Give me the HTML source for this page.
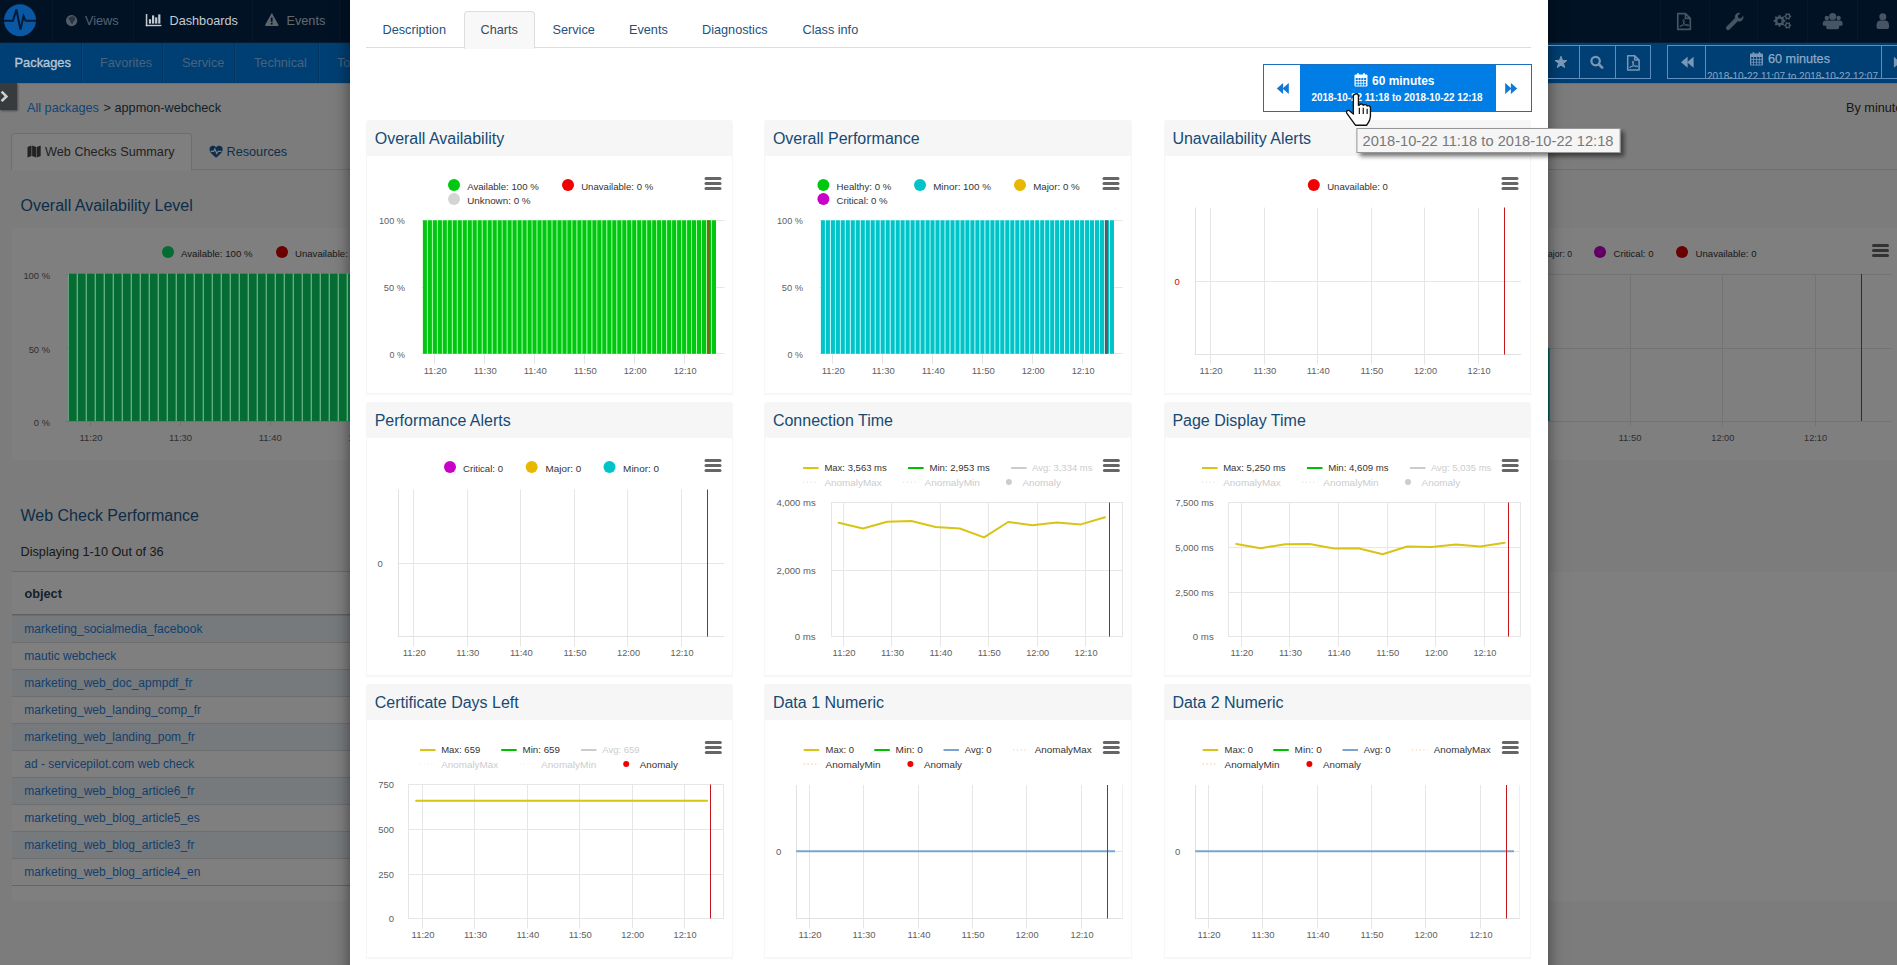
<!DOCTYPE html>
<html><head><meta charset="utf-8"><title>Charts</title>
<style>
html,body{margin:0;padding:0;}
body{width:1897px;height:965px;overflow:hidden;position:relative;background:#fff;font-family:"Liberation Sans", sans-serif;font-size:14px;color:#333;}
.abs{position:absolute;}
.t{position:absolute;white-space:nowrap;line-height:20px;height:20px;}
svg{position:absolute;left:0;top:0;overflow:visible;}
svg text{font-family:"Liberation Sans", sans-serif;}
#bg{position:absolute;left:0;top:0;width:1897px;height:965px;overflow:hidden;background:#fff;}
#ov{position:absolute;left:0;top:0;width:1897px;height:965px;background:rgba(0,0,0,.5);}
#modal{position:absolute;left:350px;top:-20px;width:1198px;height:1010px;background:#fff;box-shadow:0 5px 15px rgba(0,0,0,.5);}
#mc{position:absolute;left:0;top:0;width:1897px;height:965px;overflow:hidden;}
</style></head><body>
<div id="bg">
<div class="abs" style="left:0;top:83px;width:1897px;height:882px;background:#f8f8f8"></div>
<div class="abs" style="left:12px;top:228px;width:1885px;height:232px;background:#fff"></div>
<div class="abs" style="left:12px;top:572px;width:1885px;height:329px;background:#fff"></div>
<div class="abs" style="left:0;top:0;width:1897px;height:43px;background:#02254a"></div>
<div class="abs" style="left:0;top:43px;width:1897px;height:40px;background:#007ee6"></div>
<div class="abs" style="left:0;top:42px;width:1897px;height:1px;background:#0d3a66"></div>
<div class="abs" style="left:52px;top:0;width:1px;height:42px;background:#0e3156"></div>
<div class="abs" style="left:133px;top:0;width:1px;height:42px;background:#0e3156"></div>
<div class="abs" style="left:252px;top:0;width:1px;height:42px;background:#0e3156"></div>
<div class="abs" style="left:339px;top:0;width:1px;height:42px;background:#0e3156"></div>
<div class="abs" style="left:1660px;top:0;width:1px;height:42px;background:#0e3156"></div>
<div class="abs" style="left:1709px;top:0;width:1px;height:42px;background:#0e3156"></div>
<div class="abs" style="left:1757px;top:0;width:1px;height:42px;background:#0e3156"></div>
<div class="abs" style="left:1807px;top:0;width:1px;height:42px;background:#0e3156"></div>
<div class="abs" style="left:1857px;top:0;width:1px;height:42px;background:#0e3156"></div>
<div class="abs" style="left:81px;top:43px;width:1px;height:40px;background:#0468c0"></div>
<div class="abs" style="left:82px;top:43px;width:1px;height:40px;background:#1489ee"></div>
<div class="abs" style="left:162px;top:43px;width:1px;height:40px;background:#0468c0"></div>
<div class="abs" style="left:163px;top:43px;width:1px;height:40px;background:#1489ee"></div>
<div class="abs" style="left:234px;top:43px;width:1px;height:40px;background:#0468c0"></div>
<div class="abs" style="left:235px;top:43px;width:1px;height:40px;background:#1489ee"></div>
<div class="abs" style="left:318px;top:43px;width:1px;height:40px;background:#0468c0"></div>
<div class="abs" style="left:319px;top:43px;width:1px;height:40px;background:#1489ee"></div>
<div class="abs" style="left:0;top:83px;width:1897px;height:1px;background:#cfe3f3"></div>
<div class="t" style="left:85.0px;top:10.5px;color:#a8c0e0;font-size:12.7px;font-weight:normal;">Views</div>
<div class="t" style="left:286.5px;top:10.5px;color:#c2cfdd;font-size:12.7px;font-weight:normal;">Events</div>
<div class="t" style="left:100.0px;top:52.5px;color:#8ec4fb;font-size:12.7px;font-weight:normal;">Favorites</div>
<div class="t" style="left:182.0px;top:52.5px;color:#8ec4fb;font-size:12.7px;font-weight:normal;">Service</div>
<div class="t" style="left:254.0px;top:52.5px;color:#8ec4fb;font-size:12.7px;font-weight:normal;">Technical</div>
<div class="t" style="left:337.0px;top:52.5px;color:#8ec4fb;font-size:12.7px;font-weight:normal;">Tools</div>
<div class="abs" style="left:0;top:83px;width:17px;height:27px;background:#70767c;box-shadow:1px 1px 2px rgba(0,0,0,.4)"></div>
<div class="t" style="left:27.0px;top:97.5px;color:#2a8ae8;font-size:12.7px;font-weight:normal;">All packages</div>
<div class="t" style="left:103.5px;top:97.5px;color:#444;font-size:12.7px;font-weight:normal;">&gt;</div>
<div class="t" style="left:114.5px;top:97.5px;color:#2a3e54;font-size:12.7px;font-weight:normal;">appmon-webcheck</div>
<div class="t" style="left:1846.0px;top:97.5px;color:#333;font-size:12.7px;font-weight:normal;">By minute</div>
<div class="abs" style="left:12px;top:169px;width:1885px;height:1px;background:#ddd"></div>
<div class="abs" style="left:11px;top:133px;width:179px;height:36px;border:1px solid #ddd;border-bottom-color:#fff;border-radius:4px 4px 0 0;background:#fff"></div>
<div class="t" style="left:45.0px;top:141.5px;color:#444;font-size:12.7px;font-weight:normal;">Web Checks Summary</div>
<div class="t" style="left:226.5px;top:141.5px;color:#1d5d96;font-size:12.7px;font-weight:normal;">Resources</div>
<div class="t" style="left:20.5px;top:195.5px;color:#1a5a90;font-size:16px;font-weight:normal;">Overall Availability Level</div>
<div class="t" style="left:20.5px;top:505.5px;color:#1a5a90;font-size:16px;font-weight:normal;">Web Check Performance</div>
<div class="t" style="left:20.5px;top:541.5px;color:#333;font-size:12.7px;font-weight:normal;">Displaying 1-10 Out of 36</div>
<div class="abs" style="left:12px;top:571px;width:400px;height:1px;background:#d5d5d5"></div>
<div class="t" style="left:24.5px;top:583.5px;color:#27425e;font-size:12.7px;font-weight:bold;">object</div>
<div class="abs" style="left:12px;top:614px;width:400px;height:2px;background:linear-gradient(#c2c2c2 0 60%,#dadada 60%)"></div>
<div class="abs" style="left:12px;top:616px;width:400px;height:26px;background:#eef4fa;border-bottom:1px solid #dcdcdc"></div>
<div class="t" style="left:24.3px;top:618.8px;color:#2a80da;font-size:12.0px;font-weight:normal;">marketing_socialmedia_facebook</div>
<div class="abs" style="left:12px;top:643px;width:400px;height:26px;background:#ffffff;border-bottom:1px solid #dcdcdc"></div>
<div class="t" style="left:24.3px;top:645.8px;color:#2a80da;font-size:12.0px;font-weight:normal;">mautic webcheck</div>
<div class="abs" style="left:12px;top:670px;width:400px;height:26px;background:#eef4fa;border-bottom:1px solid #dcdcdc"></div>
<div class="t" style="left:24.3px;top:672.8px;color:#2a80da;font-size:12.0px;font-weight:normal;">marketing_web_doc_apmpdf_fr</div>
<div class="abs" style="left:12px;top:697px;width:400px;height:26px;background:#ffffff;border-bottom:1px solid #dcdcdc"></div>
<div class="t" style="left:24.3px;top:699.8px;color:#2a80da;font-size:12.0px;font-weight:normal;">marketing_web_landing_comp_fr</div>
<div class="abs" style="left:12px;top:724px;width:400px;height:26px;background:#eef4fa;border-bottom:1px solid #dcdcdc"></div>
<div class="t" style="left:24.3px;top:726.8px;color:#2a80da;font-size:12.0px;font-weight:normal;">marketing_web_landing_pom_fr</div>
<div class="abs" style="left:12px;top:751px;width:400px;height:26px;background:#ffffff;border-bottom:1px solid #dcdcdc"></div>
<div class="t" style="left:24.3px;top:753.8px;color:#2a80da;font-size:12.0px;font-weight:normal;">ad - servicepilot.com web check</div>
<div class="abs" style="left:12px;top:778px;width:400px;height:26px;background:#eef4fa;border-bottom:1px solid #dcdcdc"></div>
<div class="t" style="left:24.3px;top:780.8px;color:#2a80da;font-size:12.0px;font-weight:normal;">marketing_web_blog_article6_fr</div>
<div class="abs" style="left:12px;top:805px;width:400px;height:26px;background:#ffffff;border-bottom:1px solid #dcdcdc"></div>
<div class="t" style="left:24.3px;top:807.8px;color:#2a80da;font-size:12.0px;font-weight:normal;">marketing_web_blog_article5_es</div>
<div class="abs" style="left:12px;top:832px;width:400px;height:26px;background:#eef4fa;border-bottom:1px solid #dcdcdc"></div>
<div class="t" style="left:24.3px;top:834.8px;color:#2a80da;font-size:12.0px;font-weight:normal;">marketing_web_blog_article3_fr</div>
<div class="abs" style="left:12px;top:859px;width:400px;height:26px;background:#ffffff;border-bottom:1px solid #dcdcdc"></div>
<div class="t" style="left:24.3px;top:861.8px;color:#2a80da;font-size:12.0px;font-weight:normal;">marketing_web_blog_article4_en</div>
<div class="abs" style="left:12px;top:885px;width:400px;height:1px;background:#c8c8c8"></div>
<svg width="1897" height="965" viewBox="0 0 1897 965">
<g fill="#a9bcd6"><circle cx="71.6" cy="20.6" r="5.6"/></g><path d="M69.1 17.6 l3 -1.5 l2.5 1 l1 2.5 l-2 2 l-1 2.5 l-2 -1 l-0.5 -2.5 l-2 -1.5z" fill="#02254a" opacity=".55"/>
<path d="M272.1 13.6 l6.3 11.2 a0.8 0.8 0 0 1 -0.7 1.2 h-11.8 a0.8 0.8 0 0 1 -0.7 -1.2 l6.3 -11.2 a0.7 0.7 0 0 1 1.2 0z" fill="#bccadb"/><rect x="270.8" y="17.6" width="1.8" height="4.2" fill="#02254a"/><rect x="270.8" y="22.8" width="1.8" height="1.7" fill="#02254a"/>
<g transform="translate(1677.0 12.8) scale(1.10) translate(-1677.0 -12.8)"><path d="M1677.7 13.5 h7 l4.4 4.4 v10 h-11.4z M1684.7 13.5 v4.4 h4.4" fill="none" stroke="#8ca8c6" stroke-width="1.5" stroke-linejoin="round"/><path d="M1679.6 25.2 c2.4 -0.6 4.2 -2.6 4 -5.6 c-0.1 -1 -1.3 -1 -1.2 0 c0.2 2.6 2 4.6 4.4 5 c1.6 0.2 1.4 -1 0 -1 c-2.6 0 -5.4 0.6 -7.2 1.6z" fill="none" stroke="#8ca8c6" stroke-width="0.9"/></g>
<path d="M1726.6 26.6 l8.3 -8.3 a4.4 4.4 0 0 1 5.6 -5.4 l-2.7 2.7 l0.5 2.4 l2.4 0.5 l2.7 -2.7 a4.4 4.4 0 0 1 -5.6 5.4 l-8.3 8.3 a1.6 1.6 0 0 1 -2.9 -2.9z" fill="#8ca8c6"/>
<polygon points="1785.47,20.31 1785.47,21.49 1783.86,22.22 1783.52,23.05 1784.14,24.71 1783.31,25.54 1781.65,24.92 1780.82,25.26 1780.09,26.87 1778.91,26.87 1778.18,25.26 1777.35,24.92 1775.69,25.54 1774.86,24.71 1775.48,23.05 1775.14,22.22 1773.53,21.49 1773.53,20.31 1775.14,19.58 1775.48,18.75 1774.86,17.09 1775.69,16.26 1777.35,16.88 1778.18,16.54 1778.91,14.93 1780.09,14.93 1780.82,16.54 1781.65,16.88 1783.31,16.26 1784.14,17.09 1783.52,18.75 1783.86,19.58" fill="#8ca8c6"/><circle cx="1779.5" cy="20.9" r="2.2" fill="#02254a"/><polygon points="1791.27,15.93 1791.27,16.87 1790.23,17.45 1789.87,18.07 1789.89,19.26 1789.08,19.73 1788.06,19.11 1787.34,19.11 1786.32,19.73 1785.51,19.26 1785.53,18.07 1785.17,17.45 1784.13,16.87 1784.13,15.93 1785.17,15.35 1785.53,14.73 1785.51,13.54 1786.32,13.07 1787.34,13.69 1788.06,13.69 1789.08,13.07 1789.89,13.54 1789.87,14.73 1790.23,15.35" fill="#8ca8c6"/><circle cx="1787.7" cy="16.4" r="1.3" fill="#02254a"/><polygon points="1791.27,24.93 1791.27,25.87 1790.23,26.45 1789.87,27.07 1789.89,28.26 1789.08,28.73 1788.06,28.11 1787.34,28.11 1786.32,28.73 1785.51,28.26 1785.53,27.07 1785.17,26.45 1784.13,25.87 1784.13,24.93 1785.17,24.35 1785.53,23.73 1785.51,22.54 1786.32,22.07 1787.34,22.69 1788.06,22.69 1789.08,22.07 1789.89,22.54 1789.87,23.73 1790.23,24.35" fill="#8ca8c6"/><circle cx="1787.7" cy="25.4" r="1.3" fill="#02254a"/>
<circle cx="1826.8" cy="18.0" r="2.2" fill="#8ca8c6"/><path d="M1822.80 23.60 c0 -2.56 1.28 -3.20 2.72 -3.20 h2.56 c1.44 0 2.72 0.64 2.72 3.20 v1.12 a1.12 1.12 0 0 1 -1.12 1.12 h-5.76 a1.12 1.12 0 0 1 -1.12 -1.12 z" fill="#8ca8c6"/><circle cx="1838.6" cy="18.0" r="2.2" fill="#8ca8c6"/><path d="M1834.60 23.60 c0 -2.56 1.28 -3.20 2.72 -3.20 h2.56 c1.44 0 2.72 0.64 2.72 3.20 v1.12 a1.12 1.12 0 0 1 -1.12 1.12 h-5.76 a1.12 1.12 0 0 1 -1.12 -1.12 z" fill="#8ca8c6"/><circle cx="1832.7" cy="16.5" r="3.6" fill="#8ca8c6"/><path d="M1826.20 25.60 c0 -4.16 2.08 -5.20 4.42 -5.20 h4.16 c2.34 0 4.42 1.04 4.42 5.20 v1.82 a1.82 1.82 0 0 1 -1.82 1.82 h-9.36 a1.82 1.82 0 0 1 -1.82 -1.82 z" fill="#8ca8c6"/>
<circle cx="1882.8" cy="16.8" r="3.5" fill="#8ca8c6"/><path d="M1876.55 25.50 c0 -4.00 2.00 -5.00 4.25 -5.00 h4.00 c2.25 0 4.25 1.00 4.25 5.00 v1.75 a1.75 1.75 0 0 1 -1.75 1.75 h-9.00 a1.75 1.75 0 0 1 -1.75 -1.75 z" fill="#8ca8c6"/>
<path d="M27.5 147.1 l4 -1.6 v10.4 l-4 1.6z M32.1 145.5 l4 1.6 v10.4 l-4 -1.6z M36.7 147.1 l4 -1.6 v10.4 l-4 1.6z" fill="#444"/>
<path d="M216.1 147.3 c-1.6 -2.6 -6.6 -2 -6.6 1.9 c0 3.6 4.2 6.2 6.6 8.6 c2.4 -2.4 6.6 -5 6.6 -8.6 c0 -3.9 -5 -4.5 -6.6 -1.9z" fill="#1d5d96"/><path d="M210.7 151.3 h3 l1.2 -2.4 l1.8 4.6 l1.4 -2.2 h3.4" fill="none" stroke="#fff" stroke-width="1.2"/>
<circle cx="168.0" cy="252.0" r="6.0" fill="#08d866"/>
<text x="181.0" y="256.6" font-size="9.399999999999999" fill="#333" textLength="71.5" lengthAdjust="spacingAndGlyphs">Available: 100 %</text>
<circle cx="282.0" cy="252.0" r="6.0" fill="#d40000"/>
<text x="295.0" y="256.6" font-size="9.399999999999999" fill="#333" textLength="72.0" lengthAdjust="spacingAndGlyphs">Unavailable: 0 %</text>
<line x1="66.0" y1="274.5" x2="420.0" y2="274.5" stroke="#e6e6e6" stroke-width="1"/>
<text x="50.0" y="278.6" font-size="9.399999999999999" fill="#606060" text-anchor="end">100 %</text>
<line x1="66.0" y1="348.5" x2="420.0" y2="348.5" stroke="#e6e6e6" stroke-width="1"/>
<text x="50.0" y="352.6" font-size="9.399999999999999" fill="#606060" text-anchor="end">50 %</text>
<line x1="66.0" y1="421.5" x2="420.0" y2="421.5" stroke="#e6e6e6" stroke-width="1"/>
<text x="50.0" y="425.6" font-size="9.399999999999999" fill="#606060" text-anchor="end">0 %</text>
<line x1="90.5" y1="421.0" x2="90.5" y2="426.0" stroke="#e2e2e2" stroke-width="1"/>
<text x="91.0" y="441.1" font-size="9.399999999999999" fill="#606060" text-anchor="middle" textLength="23.0" lengthAdjust="spacingAndGlyphs">11:20</text>
<line x1="180.5" y1="421.0" x2="180.5" y2="426.0" stroke="#e2e2e2" stroke-width="1"/>
<text x="180.6" y="441.1" font-size="9.399999999999999" fill="#606060" text-anchor="middle" textLength="23.0" lengthAdjust="spacingAndGlyphs">11:30</text>
<line x1="270.5" y1="421.0" x2="270.5" y2="426.0" stroke="#e2e2e2" stroke-width="1"/>
<text x="270.2" y="441.1" font-size="9.399999999999999" fill="#606060" text-anchor="middle" textLength="23.0" lengthAdjust="spacingAndGlyphs">11:40</text>
<line x1="359.5" y1="421.0" x2="359.5" y2="426.0" stroke="#e2e2e2" stroke-width="1"/>
<text x="359.8" y="441.1" font-size="9.399999999999999" fill="#606060" text-anchor="middle" textLength="23.0" lengthAdjust="spacingAndGlyphs">11:50</text>
<text x="1548.0" y="256.6" font-size="9.399999999999999" fill="#333" textLength="24.0" lengthAdjust="spacingAndGlyphs">ajor: 0</text>
<circle cx="1600.0" cy="252.0" r="6.0" fill="#c000c8"/>
<text x="1613.5" y="256.6" font-size="9.399999999999999" fill="#333" textLength="40.0" lengthAdjust="spacingAndGlyphs">Critical: 0</text>
<circle cx="1682.0" cy="252.0" r="6.0" fill="#d40000"/>
<text x="1695.5" y="256.6" font-size="9.399999999999999" fill="#333" textLength="61.0" lengthAdjust="spacingAndGlyphs">Unavailable: 0</text>
<rect x="1872.0" y="244.0" width="17" height="3" rx="1.5" fill="#666"/><rect x="1872.0" y="249.0" width="17" height="3" rx="1.5" fill="#666"/><rect x="1872.0" y="254.0" width="17" height="3" rx="1.5" fill="#666"/>
<line x1="1500.0" y1="274.5" x2="1892.0" y2="274.5" stroke="#e6e6e6" stroke-width="1"/>
<line x1="1500.0" y1="348.5" x2="1892.0" y2="348.5" stroke="#e6e6e6" stroke-width="1"/>
<line x1="1500.0" y1="421.5" x2="1892.0" y2="421.5" stroke="#e6e6e6" stroke-width="1"/>
<line x1="1630.5" y1="274.0" x2="1630.5" y2="426.0" stroke="#e6e6e6" stroke-width="1"/>
<text x="1630.0" y="441.1" font-size="9.399999999999999" fill="#606060" text-anchor="middle" textLength="23.0" lengthAdjust="spacingAndGlyphs">11:50</text>
<line x1="1722.5" y1="274.0" x2="1722.5" y2="426.0" stroke="#e6e6e6" stroke-width="1"/>
<text x="1722.8" y="441.1" font-size="9.399999999999999" fill="#606060" text-anchor="middle" textLength="23.0" lengthAdjust="spacingAndGlyphs">12:00</text>
<line x1="1815.5" y1="274.0" x2="1815.5" y2="426.0" stroke="#e6e6e6" stroke-width="1"/>
<text x="1815.6" y="441.1" font-size="9.399999999999999" fill="#606060" text-anchor="middle" textLength="23.0" lengthAdjust="spacingAndGlyphs">12:10</text>
<line x1="1861.5" y1="274.0" x2="1861.5" y2="421.0" stroke="#ff1a1a" stroke-width="1"/>
<rect x="1540.0" y="348.0" width="9.6" height="73.0" fill="#00b8c0"/>
</svg>
</div>
<div id="ov"></div>
<div id="modal"></div>
<div id="mc">
<div class="abs" style="left:366px;top:47px;width:1165px;height:1px;background:#ddd"></div>
<div class="abs" style="left:464px;top:11px;width:69px;height:36px;border:1px solid #ddd;border-bottom-color:#f8f8f8;border-radius:4px 4px 0 0;background:#f8f8f8"></div>
<div class="t" style="left:382.5px;top:19.5px;color:#1b5280;font-size:12.7px;font-weight:normal;">Description</div>
<div class="t" style="left:480.5px;top:19.5px;color:#3a4a5a;font-size:12.7px;font-weight:normal;">Charts</div>
<div class="t" style="left:552.5px;top:19.5px;color:#1b5280;font-size:12.7px;font-weight:normal;">Service</div>
<div class="t" style="left:629.0px;top:19.5px;color:#1b5280;font-size:12.7px;font-weight:normal;">Events</div>
<div class="t" style="left:702.0px;top:19.5px;color:#1b5280;font-size:12.7px;font-weight:normal;">Diagnostics</div>
<div class="t" style="left:802.5px;top:19.5px;color:#1b5280;font-size:12.7px;font-weight:normal;">Class info</div>
<div class="abs" style="left:1263px;top:64px;width:267px;height:46px;border:1px solid #1a6fc0;background:#fff"></div>
<div class="abs" style="left:1300px;top:65px;width:196px;height:46px;background:#007ee6"></div>
<div class="abs" style="left:366.0px;top:120px;width:366.8px;height:36px;background:#f6f6f6;border-radius:3px 3px 0 0"></div><div class="abs" style="left:366.0px;top:156px;width:366.8px;height:237.5px;background:#fff;border:1px solid #f6f6f6;border-top:none;box-sizing:border-box;box-shadow:0 1px 1px rgba(0,0,0,.03)"></div><div class="t" style="left:374.7px;top:128.5px;color:#174a73;font-size:16px;font-weight:normal;">Overall Availability</div>
<div class="abs" style="left:764.2px;top:120px;width:368.2px;height:36px;background:#f6f6f6;border-radius:3px 3px 0 0"></div><div class="abs" style="left:764.2px;top:156px;width:368.2px;height:237.5px;background:#fff;border:1px solid #f6f6f6;border-top:none;box-sizing:border-box;box-shadow:0 1px 1px rgba(0,0,0,.03)"></div><div class="t" style="left:772.9px;top:128.5px;color:#174a73;font-size:16px;font-weight:normal;">Overall Performance</div>
<div class="abs" style="left:1163.7px;top:120px;width:367.4px;height:36px;background:#f6f6f6;border-radius:3px 3px 0 0"></div><div class="abs" style="left:1163.7px;top:156px;width:367.4px;height:237.5px;background:#fff;border:1px solid #f6f6f6;border-top:none;box-sizing:border-box;box-shadow:0 1px 1px rgba(0,0,0,.03)"></div><div class="t" style="left:1172.4px;top:128.5px;color:#174a73;font-size:16px;font-weight:normal;">Unavailability Alerts</div>
<div class="abs" style="left:366.0px;top:402px;width:366.8px;height:36px;background:#f6f6f6;border-radius:3px 3px 0 0"></div><div class="abs" style="left:366.0px;top:438px;width:366.8px;height:237.5px;background:#fff;border:1px solid #f6f6f6;border-top:none;box-sizing:border-box;box-shadow:0 1px 1px rgba(0,0,0,.03)"></div><div class="t" style="left:374.7px;top:410.5px;color:#174a73;font-size:16px;font-weight:normal;">Performance Alerts</div>
<div class="abs" style="left:764.2px;top:402px;width:368.2px;height:36px;background:#f6f6f6;border-radius:3px 3px 0 0"></div><div class="abs" style="left:764.2px;top:438px;width:368.2px;height:237.5px;background:#fff;border:1px solid #f6f6f6;border-top:none;box-sizing:border-box;box-shadow:0 1px 1px rgba(0,0,0,.03)"></div><div class="t" style="left:772.9px;top:410.5px;color:#174a73;font-size:16px;font-weight:normal;">Connection Time</div>
<div class="abs" style="left:1163.7px;top:402px;width:367.4px;height:36px;background:#f6f6f6;border-radius:3px 3px 0 0"></div><div class="abs" style="left:1163.7px;top:438px;width:367.4px;height:237.5px;background:#fff;border:1px solid #f6f6f6;border-top:none;box-sizing:border-box;box-shadow:0 1px 1px rgba(0,0,0,.03)"></div><div class="t" style="left:1172.4px;top:410.5px;color:#174a73;font-size:16px;font-weight:normal;">Page Display Time</div>
<div class="abs" style="left:366.0px;top:684px;width:366.8px;height:36px;background:#f6f6f6;border-radius:3px 3px 0 0"></div><div class="abs" style="left:366.0px;top:720px;width:366.8px;height:237.5px;background:#fff;border:1px solid #f6f6f6;border-top:none;box-sizing:border-box;box-shadow:0 1px 1px rgba(0,0,0,.03)"></div><div class="t" style="left:374.7px;top:692.5px;color:#174a73;font-size:16px;font-weight:normal;">Certificate Days Left</div>
<div class="abs" style="left:764.2px;top:684px;width:368.2px;height:36px;background:#f6f6f6;border-radius:3px 3px 0 0"></div><div class="abs" style="left:764.2px;top:720px;width:368.2px;height:237.5px;background:#fff;border:1px solid #f6f6f6;border-top:none;box-sizing:border-box;box-shadow:0 1px 1px rgba(0,0,0,.03)"></div><div class="t" style="left:772.9px;top:692.5px;color:#174a73;font-size:16px;font-weight:normal;">Data 1 Numeric</div>
<div class="abs" style="left:1163.7px;top:684px;width:367.4px;height:36px;background:#f6f6f6;border-radius:3px 3px 0 0"></div><div class="abs" style="left:1163.7px;top:720px;width:367.4px;height:237.5px;background:#fff;border:1px solid #f6f6f6;border-top:none;box-sizing:border-box;box-shadow:0 1px 1px rgba(0,0,0,.03)"></div><div class="t" style="left:1172.4px;top:692.5px;color:#174a73;font-size:16px;font-weight:normal;">Data 2 Numeric</div>
<svg width="1897" height="965" viewBox="0 0 1897 965">
<g clip-path="url(#lclip)"><rect x="68.2" y="273.6" width="290.0" height="147.4" fill="#62ad80"/><rect x="69.0" y="273.6" width="7.6" height="147.4" fill="#056c33"/><rect x="78.0" y="273.6" width="7.6" height="147.4" fill="#056c33"/><rect x="87.0" y="273.6" width="7.6" height="147.4" fill="#056c33"/><rect x="96.0" y="273.6" width="7.6" height="147.4" fill="#056c33"/><rect x="105.0" y="273.6" width="7.6" height="147.4" fill="#056c33"/><rect x="114.0" y="273.6" width="7.6" height="147.4" fill="#056c33"/><rect x="123.0" y="273.6" width="7.6" height="147.4" fill="#056c33"/><rect x="132.0" y="273.6" width="7.6" height="147.4" fill="#056c33"/><rect x="141.0" y="273.6" width="7.6" height="147.4" fill="#056c33"/><rect x="150.0" y="273.6" width="7.6" height="147.4" fill="#056c33"/><rect x="159.0" y="273.6" width="7.6" height="147.4" fill="#056c33"/><rect x="168.0" y="273.6" width="7.6" height="147.4" fill="#056c33"/><rect x="177.0" y="273.6" width="7.6" height="147.4" fill="#056c33"/><rect x="186.0" y="273.6" width="7.6" height="147.4" fill="#056c33"/><rect x="195.0" y="273.6" width="7.6" height="147.4" fill="#056c33"/><rect x="204.0" y="273.6" width="7.6" height="147.4" fill="#056c33"/><rect x="213.0" y="273.6" width="7.6" height="147.4" fill="#056c33"/><rect x="222.0" y="273.6" width="7.6" height="147.4" fill="#056c33"/><rect x="231.0" y="273.6" width="7.6" height="147.4" fill="#056c33"/><rect x="240.0" y="273.6" width="7.6" height="147.4" fill="#056c33"/><rect x="249.0" y="273.6" width="7.6" height="147.4" fill="#056c33"/><rect x="258.0" y="273.6" width="7.6" height="147.4" fill="#056c33"/><rect x="267.0" y="273.6" width="7.6" height="147.4" fill="#056c33"/><rect x="276.0" y="273.6" width="7.6" height="147.4" fill="#056c33"/><rect x="285.0" y="273.6" width="7.6" height="147.4" fill="#056c33"/><rect x="294.0" y="273.6" width="7.6" height="147.4" fill="#056c33"/><rect x="303.0" y="273.6" width="7.6" height="147.4" fill="#056c33"/><rect x="312.0" y="273.6" width="7.6" height="147.4" fill="#056c33"/><rect x="321.0" y="273.6" width="7.6" height="147.4" fill="#056c33"/><rect x="330.0" y="273.6" width="7.6" height="147.4" fill="#056c33"/><rect x="339.0" y="273.6" width="7.6" height="147.4" fill="#056c33"/><rect x="348.0" y="273.6" width="7.6" height="147.4" fill="#056c33"/></g><g fill="#c3c9d0"><rect x="145.8" y="14.0" width="1.5" height="12.2" fill="#c3c9d0"/><rect x="145.8" y="24.8" width="15.6" height="1.4" fill="#c3c9d0"/><rect x="148.9" y="19.2" width="2.2" height="4.4" fill="#c3c9d0"/><rect x="152.0" y="15.4" width="2.2" height="8.2" fill="#c3c9d0"/><rect x="155.1" y="17.4" width="2.2" height="6.2" fill="#c3c9d0"/><rect x="158.2" y="14.4" width="2.2" height="9.2" fill="#c3c9d0"/></g><text x="169.5" y="25.0" font-size="12.7" fill="#c5cbd2" textLength="68.4" lengthAdjust="spacingAndGlyphs">Dashboards</text><text x="14.5" y="67.1" font-size="12.7" fill="#b7c6d6" stroke="#b7c6d6" stroke-width="0.35" textLength="56.4" lengthAdjust="spacingAndGlyphs">Packages</text><path d="M1.6 91.6 l4.8 4.8 l-4.8 4.8" fill="none" stroke="#cfcfcf" stroke-width="2.6"/><g clip-path="url(#rclip)"><rect x="1545.5" y="45.5" width="34" height="33" fill="none" stroke="#5f8fc0" stroke-width="1"/><rect x="1579.5" y="45.5" width="36" height="33" fill="none" stroke="#5f8fc0" stroke-width="1"/><rect x="1615.5" y="45.5" width="35" height="33" fill="none" stroke="#5f8fc0" stroke-width="1"/><polygon points="1561.00,56.30 1562.53,60.39 1566.90,60.58 1563.48,63.30 1564.64,67.52 1561.00,65.10 1557.36,67.52 1558.52,63.30 1555.10,60.58 1559.47,60.39" fill="#7a98b6" stroke="#7a98b6" stroke-width="1" stroke-linejoin="round"/><circle cx="1595.6" cy="61.1" r="4.2" fill="none" stroke="#7a98b6" stroke-width="2.2"/><line x1="1599.0" y1="64.5" x2="1602.2" y2="67.7" stroke="#7a98b6" stroke-width="2.6" stroke-linecap="round"/><g transform="translate(1627.0 55.0) scale(1.00) translate(-1627.0 -55.0)"><path d="M1627.7 55.7 h7 l4.4 4.4 v10 h-11.4z M1634.7 55.7 v4.4 h4.4" fill="none" stroke="#7a98b6" stroke-width="1.5" stroke-linejoin="round"/><path d="M1629.6 67.4 c2.4 -0.6 4.2 -2.6 4 -5.6 c-0.1 -1 -1.3 -1 -1.2 0 c0.2 2.6 2 4.6 4.4 5 c1.6 0.2 1.4 -1 0 -1 c-2.6 0 -5.4 0.6 -7.2 1.6z" fill="none" stroke="#7a98b6" stroke-width="0.9"/></g><rect x="1667.5" y="45.5" width="38" height="33" fill="none" stroke="#5f8fc0" stroke-width="1"/><rect x="1705.5" y="45.5" width="176" height="33" fill="none" stroke="#5f8fc0" stroke-width="1"/><rect x="1881.5" y="45.5" width="30" height="33" fill="none" stroke="#5f8fc0" stroke-width="1"/><path d="M1681.0 62.3 L1687.6 56.8 V67.8 z" fill="#7a98b6"/><path d="M1687.0 62.3 L1693.6 56.8 V67.8 z" fill="#7a98b6"/><path d="M1906.5 62.3 L1899.9 56.8 V67.8 z" fill="#7a98b6"/><path d="M1900.5 62.3 L1893.9 56.8 V67.8 z" fill="#7a98b6"/><rect x="1750.0" y="53.5" width="13" height="12" rx="1" fill="#7a98b6"/><rect x="1752.6" y="52.0" width="1.8" height="3.4" fill="#7a98b6" rx="0.9"/><rect x="1758.6" y="52.0" width="1.8" height="3.4" fill="#7a98b6" rx="0.9"/><rect x="1751.2" y="57.0" width="2.0" height="2.0" fill="#003f78"/><rect x="1754.0" y="57.0" width="2.0" height="2.0" fill="#003f78"/><rect x="1756.8" y="57.0" width="2.0" height="2.0" fill="#003f78"/><rect x="1759.6" y="57.0" width="2.0" height="2.0" fill="#003f78"/><rect x="1751.2" y="59.8" width="2.0" height="2.0" fill="#003f78"/><rect x="1754.0" y="59.8" width="2.0" height="2.0" fill="#003f78"/><rect x="1756.8" y="59.8" width="2.0" height="2.0" fill="#003f78"/><rect x="1759.6" y="59.8" width="2.0" height="2.0" fill="#003f78"/><rect x="1751.2" y="62.6" width="2.0" height="2.0" fill="#003f78"/><rect x="1754.0" y="62.6" width="2.0" height="2.0" fill="#003f78"/><rect x="1756.8" y="62.6" width="2.0" height="2.0" fill="#003f78"/><rect x="1759.6" y="62.6" width="2.0" height="2.0" fill="#003f78"/><text x="1768" y="63.4" font-size="12.7" fill="#8eaac8" stroke="#8eaac8" stroke-width="0.25" textLength="62" lengthAdjust="spacingAndGlyphs">60 minutes</text><g clip-path="url(#sbclip)"><text x="1792.5" y="80.1" font-size="10.5" fill="#86a6c6" text-anchor="middle" textLength="171.0" lengthAdjust="spacingAndGlyphs">2018-10-22 11:07 to 2018-10-22 12:07</text></g></g><defs><clipPath id="sbclip"><rect x="1700" y="43" width="197" height="36"/></clipPath><clipPath id="rclip"><rect x="1548" y="0" width="349" height="965"/></clipPath></defs><defs><clipPath id="lclip"><rect x="0" y="0" width="350" height="965"/></clipPath></defs>
<circle cx="20.0" cy="20.2" r="16.0" fill="#0a58a3"/>
<path d="M3.6 20.8 H13 L16.4 9.5 L20.4 29.5 L23.6 16.2 L25.6 20.8 H36.2" fill="none" stroke="#041a38" stroke-width="2" stroke-linejoin="miter"/>
<path d="M1276.8 88.5 L1283.1 83.0 V94.0 z" fill="#1278d8"/><path d="M1282.5 88.5 L1288.8 83.0 V94.0 z" fill="#1278d8"/>
<path d="M1517.2 88.5 L1510.9 83.0 V94.0 z" fill="#1278d8"/><path d="M1511.5 88.5 L1505.2 83.0 V94.0 z" fill="#1278d8"/>
<rect x="1354.5" y="74.5" width="13" height="12" rx="1" fill="#fff"/><rect x="1357.1" y="73.0" width="1.8" height="3.4" fill="#fff" rx="0.9"/><rect x="1363.1" y="73.0" width="1.8" height="3.4" fill="#fff" rx="0.9"/><rect x="1355.7" y="78.0" width="2.0" height="2.0" fill="#007ee6"/><rect x="1358.5" y="78.0" width="2.0" height="2.0" fill="#007ee6"/><rect x="1361.3" y="78.0" width="2.0" height="2.0" fill="#007ee6"/><rect x="1364.1" y="78.0" width="2.0" height="2.0" fill="#007ee6"/><rect x="1355.7" y="80.8" width="2.0" height="2.0" fill="#007ee6"/><rect x="1358.5" y="80.8" width="2.0" height="2.0" fill="#007ee6"/><rect x="1361.3" y="80.8" width="2.0" height="2.0" fill="#007ee6"/><rect x="1364.1" y="80.8" width="2.0" height="2.0" fill="#007ee6"/><rect x="1355.7" y="83.6" width="2.0" height="2.0" fill="#007ee6"/><rect x="1358.5" y="83.6" width="2.0" height="2.0" fill="#007ee6"/><rect x="1361.3" y="83.6" width="2.0" height="2.0" fill="#007ee6"/><rect x="1364.1" y="83.6" width="2.0" height="2.0" fill="#007ee6"/>
<text x="1372.0" y="85.1" font-size="12.7" fill="#fff" textLength="62.5" lengthAdjust="spacingAndGlyphs" font-weight="bold">60 minutes</text>
<text x="1397.0" y="101.2" font-size="10.2" fill="#fff" text-anchor="middle" textLength="171.0" lengthAdjust="spacingAndGlyphs" font-weight="bold">2018-10-22 11:18 to 2018-10-22 12:18</text>
<circle cx="454.0" cy="185.0" r="6.0" fill="#00c810"/><text x="467.2" y="189.6" font-size="9.399999999999999" fill="#333" textLength="71.6" lengthAdjust="spacingAndGlyphs">Available: 100 %</text><circle cx="568.0" cy="185.0" r="6.0" fill="#f00000"/><text x="581.2" y="189.6" font-size="9.399999999999999" fill="#333" textLength="72.0" lengthAdjust="spacingAndGlyphs">Unavailable: 0 %</text><circle cx="454.0" cy="199.0" r="6.0" fill="#d4d4d4"/><text x="467.2" y="203.6" font-size="9.399999999999999" fill="#333" textLength="63.4" lengthAdjust="spacingAndGlyphs">Unknown: 0 %</text><rect x="704.5" y="177.0" width="17" height="3" rx="1.5" fill="#666"/><rect x="704.5" y="182.0" width="17" height="3" rx="1.5" fill="#666"/><rect x="704.5" y="187.0" width="17" height="3" rx="1.5" fill="#666"/><line x1="421.6" y1="220.5" x2="724.5" y2="220.5" stroke="#e6e6e6" stroke-width="1"/><text x="405.0" y="224.4" font-size="9.399999999999999" fill="#606060" text-anchor="end" textLength="26.0" lengthAdjust="spacingAndGlyphs">100 %</text><line x1="421.6" y1="287.5" x2="724.5" y2="287.5" stroke="#e6e6e6" stroke-width="1"/><text x="405.0" y="291.4" font-size="9.399999999999999" fill="#606060" text-anchor="end" textLength="21.2" lengthAdjust="spacingAndGlyphs">50 %</text><line x1="421.6" y1="353.5" x2="724.5" y2="353.5" stroke="#e6e6e6" stroke-width="1"/><text x="405.0" y="357.7" font-size="9.399999999999999" fill="#606060" text-anchor="end" textLength="15.4" lengthAdjust="spacingAndGlyphs">0 %</text><rect x="422.9" y="220.3" width="293.1" height="133.5" fill="#b4ffb4"/><rect x="422.9" y="220.3" width="4.0" height="133.5" fill="#00c810"/><rect x="427.9" y="220.3" width="4.0" height="133.5" fill="#00c810"/><rect x="432.9" y="220.3" width="4.0" height="133.5" fill="#00c810"/><rect x="437.9" y="220.3" width="4.0" height="133.5" fill="#00c810"/><rect x="442.8" y="220.3" width="4.0" height="133.5" fill="#00c810"/><rect x="447.8" y="220.3" width="4.0" height="133.5" fill="#00c810"/><rect x="452.8" y="220.3" width="4.0" height="133.5" fill="#00c810"/><rect x="457.8" y="220.3" width="4.0" height="133.5" fill="#00c810"/><rect x="462.8" y="220.3" width="4.0" height="133.5" fill="#00c810"/><rect x="467.8" y="220.3" width="4.0" height="133.5" fill="#00c810"/><rect x="472.7" y="220.3" width="4.0" height="133.5" fill="#00c810"/><rect x="477.7" y="220.3" width="4.0" height="133.5" fill="#00c810"/><rect x="482.7" y="220.3" width="4.0" height="133.5" fill="#00c810"/><rect x="487.7" y="220.3" width="4.0" height="133.5" fill="#00c810"/><rect x="492.7" y="220.3" width="4.0" height="133.5" fill="#00c810"/><rect x="497.7" y="220.3" width="4.0" height="133.5" fill="#00c810"/><rect x="502.6" y="220.3" width="4.0" height="133.5" fill="#00c810"/><rect x="507.6" y="220.3" width="4.0" height="133.5" fill="#00c810"/><rect x="512.6" y="220.3" width="4.0" height="133.5" fill="#00c810"/><rect x="517.6" y="220.3" width="4.0" height="133.5" fill="#00c810"/><rect x="522.6" y="220.3" width="4.0" height="133.5" fill="#00c810"/><rect x="527.6" y="220.3" width="4.0" height="133.5" fill="#00c810"/><rect x="532.5" y="220.3" width="4.0" height="133.5" fill="#00c810"/><rect x="537.5" y="220.3" width="4.0" height="133.5" fill="#00c810"/><rect x="542.5" y="220.3" width="4.0" height="133.5" fill="#00c810"/><rect x="547.5" y="220.3" width="4.0" height="133.5" fill="#00c810"/><rect x="552.5" y="220.3" width="4.0" height="133.5" fill="#00c810"/><rect x="557.5" y="220.3" width="4.0" height="133.5" fill="#00c810"/><rect x="562.5" y="220.3" width="4.0" height="133.5" fill="#00c810"/><rect x="567.4" y="220.3" width="4.0" height="133.5" fill="#00c810"/><rect x="572.4" y="220.3" width="4.0" height="133.5" fill="#00c810"/><rect x="577.4" y="220.3" width="4.0" height="133.5" fill="#00c810"/><rect x="582.4" y="220.3" width="4.0" height="133.5" fill="#00c810"/><rect x="587.4" y="220.3" width="4.0" height="133.5" fill="#00c810"/><rect x="592.4" y="220.3" width="4.0" height="133.5" fill="#00c810"/><rect x="597.3" y="220.3" width="4.0" height="133.5" fill="#00c810"/><rect x="602.3" y="220.3" width="4.0" height="133.5" fill="#00c810"/><rect x="607.3" y="220.3" width="4.0" height="133.5" fill="#00c810"/><rect x="612.3" y="220.3" width="4.0" height="133.5" fill="#00c810"/><rect x="617.3" y="220.3" width="4.0" height="133.5" fill="#00c810"/><rect x="622.3" y="220.3" width="4.0" height="133.5" fill="#00c810"/><rect x="627.2" y="220.3" width="4.0" height="133.5" fill="#00c810"/><rect x="632.2" y="220.3" width="4.0" height="133.5" fill="#00c810"/><rect x="637.2" y="220.3" width="4.0" height="133.5" fill="#00c810"/><rect x="642.2" y="220.3" width="4.0" height="133.5" fill="#00c810"/><rect x="647.2" y="220.3" width="4.0" height="133.5" fill="#00c810"/><rect x="652.2" y="220.3" width="4.0" height="133.5" fill="#00c810"/><rect x="657.1" y="220.3" width="4.0" height="133.5" fill="#00c810"/><rect x="662.1" y="220.3" width="4.0" height="133.5" fill="#00c810"/><rect x="667.1" y="220.3" width="4.0" height="133.5" fill="#00c810"/><rect x="672.1" y="220.3" width="4.0" height="133.5" fill="#00c810"/><rect x="677.1" y="220.3" width="4.0" height="133.5" fill="#00c810"/><rect x="682.1" y="220.3" width="4.0" height="133.5" fill="#00c810"/><rect x="687.1" y="220.3" width="4.0" height="133.5" fill="#00c810"/><rect x="692.0" y="220.3" width="4.0" height="133.5" fill="#00c810"/><rect x="697.0" y="220.3" width="4.0" height="133.5" fill="#00c810"/><rect x="702.0" y="220.3" width="4.0" height="133.5" fill="#00c810"/><rect x="707.0" y="220.3" width="4.0" height="133.5" fill="#00c810"/><rect x="712.0" y="220.3" width="4.0" height="133.5" fill="#00c810"/><rect x="706.9" y="220.3" width="2.9" height="133.5" fill="#7a6814"/><line x1="434.5" y1="353.8" x2="434.5" y2="363.8" stroke="#e6e6e6" stroke-width="1"/><text x="435.2" y="374.1" font-size="9.399999999999999" fill="#606060" text-anchor="middle" textLength="23.0" lengthAdjust="spacingAndGlyphs">11:20</text><line x1="484.5" y1="353.8" x2="484.5" y2="363.8" stroke="#e6e6e6" stroke-width="1"/><text x="485.2" y="374.1" font-size="9.399999999999999" fill="#606060" text-anchor="middle" textLength="23.0" lengthAdjust="spacingAndGlyphs">11:30</text><line x1="534.5" y1="353.8" x2="534.5" y2="363.8" stroke="#e6e6e6" stroke-width="1"/><text x="535.2" y="374.1" font-size="9.399999999999999" fill="#606060" text-anchor="middle" textLength="23.0" lengthAdjust="spacingAndGlyphs">11:40</text><line x1="584.5" y1="353.8" x2="584.5" y2="363.8" stroke="#e6e6e6" stroke-width="1"/><text x="585.2" y="374.1" font-size="9.399999999999999" fill="#606060" text-anchor="middle" textLength="23.0" lengthAdjust="spacingAndGlyphs">11:50</text><line x1="634.5" y1="353.8" x2="634.5" y2="363.8" stroke="#e6e6e6" stroke-width="1"/><text x="635.2" y="374.1" font-size="9.399999999999999" fill="#606060" text-anchor="middle" textLength="23.0" lengthAdjust="spacingAndGlyphs">12:00</text><line x1="684.5" y1="353.8" x2="684.5" y2="363.8" stroke="#e6e6e6" stroke-width="1"/><text x="685.2" y="374.1" font-size="9.399999999999999" fill="#606060" text-anchor="middle" textLength="23.0" lengthAdjust="spacingAndGlyphs">12:10</text>
<circle cx="823.4" cy="185.0" r="6.0" fill="#00c810"/><text x="836.6" y="189.6" font-size="9.399999999999999" fill="#333" textLength="54.7" lengthAdjust="spacingAndGlyphs">Healthy: 0 %</text><circle cx="920.0" cy="185.0" r="6.0" fill="#00c4c8"/><text x="933.2" y="189.6" font-size="9.399999999999999" fill="#333" textLength="57.7" lengthAdjust="spacingAndGlyphs">Minor: 100 %</text><circle cx="1020.0" cy="185.0" r="6.0" fill="#e8b800"/><text x="1033.2" y="189.6" font-size="9.399999999999999" fill="#333" textLength="46.5" lengthAdjust="spacingAndGlyphs">Major: 0 %</text><circle cx="823.4" cy="199.0" r="6.0" fill="#c800c8"/><text x="836.6" y="203.6" font-size="9.399999999999999" fill="#333" textLength="51.0" lengthAdjust="spacingAndGlyphs">Critical: 0 %</text><rect x="1102.5" y="177.0" width="17" height="3" rx="1.5" fill="#666"/><rect x="1102.5" y="182.0" width="17" height="3" rx="1.5" fill="#666"/><rect x="1102.5" y="187.0" width="17" height="3" rx="1.5" fill="#666"/><line x1="819.6" y1="220.5" x2="1122.5" y2="220.5" stroke="#e6e6e6" stroke-width="1"/><text x="803.0" y="224.4" font-size="9.399999999999999" fill="#606060" text-anchor="end" textLength="26.0" lengthAdjust="spacingAndGlyphs">100 %</text><line x1="819.6" y1="287.5" x2="1122.5" y2="287.5" stroke="#e6e6e6" stroke-width="1"/><text x="803.0" y="291.4" font-size="9.399999999999999" fill="#606060" text-anchor="end" textLength="21.2" lengthAdjust="spacingAndGlyphs">50 %</text><line x1="819.6" y1="353.5" x2="1122.5" y2="353.5" stroke="#e6e6e6" stroke-width="1"/><text x="803.0" y="357.7" font-size="9.399999999999999" fill="#606060" text-anchor="end" textLength="15.4" lengthAdjust="spacingAndGlyphs">0 %</text><rect x="820.9" y="220.3" width="293.1" height="133.5" fill="#c8fcfc"/><rect x="820.9" y="220.3" width="4.0" height="133.5" fill="#00c4c8"/><rect x="825.9" y="220.3" width="4.0" height="133.5" fill="#00c4c8"/><rect x="830.9" y="220.3" width="4.0" height="133.5" fill="#00c4c8"/><rect x="835.9" y="220.3" width="4.0" height="133.5" fill="#00c4c8"/><rect x="840.8" y="220.3" width="4.0" height="133.5" fill="#00c4c8"/><rect x="845.8" y="220.3" width="4.0" height="133.5" fill="#00c4c8"/><rect x="850.8" y="220.3" width="4.0" height="133.5" fill="#00c4c8"/><rect x="855.8" y="220.3" width="4.0" height="133.5" fill="#00c4c8"/><rect x="860.8" y="220.3" width="4.0" height="133.5" fill="#00c4c8"/><rect x="865.8" y="220.3" width="4.0" height="133.5" fill="#00c4c8"/><rect x="870.7" y="220.3" width="4.0" height="133.5" fill="#00c4c8"/><rect x="875.7" y="220.3" width="4.0" height="133.5" fill="#00c4c8"/><rect x="880.7" y="220.3" width="4.0" height="133.5" fill="#00c4c8"/><rect x="885.7" y="220.3" width="4.0" height="133.5" fill="#00c4c8"/><rect x="890.7" y="220.3" width="4.0" height="133.5" fill="#00c4c8"/><rect x="895.7" y="220.3" width="4.0" height="133.5" fill="#00c4c8"/><rect x="900.6" y="220.3" width="4.0" height="133.5" fill="#00c4c8"/><rect x="905.6" y="220.3" width="4.0" height="133.5" fill="#00c4c8"/><rect x="910.6" y="220.3" width="4.0" height="133.5" fill="#00c4c8"/><rect x="915.6" y="220.3" width="4.0" height="133.5" fill="#00c4c8"/><rect x="920.6" y="220.3" width="4.0" height="133.5" fill="#00c4c8"/><rect x="925.6" y="220.3" width="4.0" height="133.5" fill="#00c4c8"/><rect x="930.5" y="220.3" width="4.0" height="133.5" fill="#00c4c8"/><rect x="935.5" y="220.3" width="4.0" height="133.5" fill="#00c4c8"/><rect x="940.5" y="220.3" width="4.0" height="133.5" fill="#00c4c8"/><rect x="945.5" y="220.3" width="4.0" height="133.5" fill="#00c4c8"/><rect x="950.5" y="220.3" width="4.0" height="133.5" fill="#00c4c8"/><rect x="955.5" y="220.3" width="4.0" height="133.5" fill="#00c4c8"/><rect x="960.5" y="220.3" width="4.0" height="133.5" fill="#00c4c8"/><rect x="965.4" y="220.3" width="4.0" height="133.5" fill="#00c4c8"/><rect x="970.4" y="220.3" width="4.0" height="133.5" fill="#00c4c8"/><rect x="975.4" y="220.3" width="4.0" height="133.5" fill="#00c4c8"/><rect x="980.4" y="220.3" width="4.0" height="133.5" fill="#00c4c8"/><rect x="985.4" y="220.3" width="4.0" height="133.5" fill="#00c4c8"/><rect x="990.4" y="220.3" width="4.0" height="133.5" fill="#00c4c8"/><rect x="995.3" y="220.3" width="4.0" height="133.5" fill="#00c4c8"/><rect x="1000.3" y="220.3" width="4.0" height="133.5" fill="#00c4c8"/><rect x="1005.3" y="220.3" width="4.0" height="133.5" fill="#00c4c8"/><rect x="1010.3" y="220.3" width="4.0" height="133.5" fill="#00c4c8"/><rect x="1015.3" y="220.3" width="4.0" height="133.5" fill="#00c4c8"/><rect x="1020.3" y="220.3" width="4.0" height="133.5" fill="#00c4c8"/><rect x="1025.2" y="220.3" width="4.0" height="133.5" fill="#00c4c8"/><rect x="1030.2" y="220.3" width="4.0" height="133.5" fill="#00c4c8"/><rect x="1035.2" y="220.3" width="4.0" height="133.5" fill="#00c4c8"/><rect x="1040.2" y="220.3" width="4.0" height="133.5" fill="#00c4c8"/><rect x="1045.2" y="220.3" width="4.0" height="133.5" fill="#00c4c8"/><rect x="1050.2" y="220.3" width="4.0" height="133.5" fill="#00c4c8"/><rect x="1055.1" y="220.3" width="4.0" height="133.5" fill="#00c4c8"/><rect x="1060.1" y="220.3" width="4.0" height="133.5" fill="#00c4c8"/><rect x="1065.1" y="220.3" width="4.0" height="133.5" fill="#00c4c8"/><rect x="1070.1" y="220.3" width="4.0" height="133.5" fill="#00c4c8"/><rect x="1075.1" y="220.3" width="4.0" height="133.5" fill="#00c4c8"/><rect x="1080.1" y="220.3" width="4.0" height="133.5" fill="#00c4c8"/><rect x="1085.1" y="220.3" width="4.0" height="133.5" fill="#00c4c8"/><rect x="1090.0" y="220.3" width="4.0" height="133.5" fill="#00c4c8"/><rect x="1095.0" y="220.3" width="4.0" height="133.5" fill="#00c4c8"/><rect x="1100.0" y="220.3" width="4.0" height="133.5" fill="#00c4c8"/><rect x="1105.0" y="220.3" width="4.0" height="133.5" fill="#00c4c8"/><rect x="1110.0" y="220.3" width="4.0" height="133.5" fill="#00c4c8"/><rect x="1104.9" y="220.3" width="2.9" height="133.5" fill="#5a5a5a"/><line x1="832.5" y1="353.8" x2="832.5" y2="363.8" stroke="#e6e6e6" stroke-width="1"/><text x="833.2" y="374.1" font-size="9.399999999999999" fill="#606060" text-anchor="middle" textLength="23.0" lengthAdjust="spacingAndGlyphs">11:20</text><line x1="882.5" y1="353.8" x2="882.5" y2="363.8" stroke="#e6e6e6" stroke-width="1"/><text x="883.2" y="374.1" font-size="9.399999999999999" fill="#606060" text-anchor="middle" textLength="23.0" lengthAdjust="spacingAndGlyphs">11:30</text><line x1="932.5" y1="353.8" x2="932.5" y2="363.8" stroke="#e6e6e6" stroke-width="1"/><text x="933.2" y="374.1" font-size="9.399999999999999" fill="#606060" text-anchor="middle" textLength="23.0" lengthAdjust="spacingAndGlyphs">11:40</text><line x1="982.5" y1="353.8" x2="982.5" y2="363.8" stroke="#e6e6e6" stroke-width="1"/><text x="983.2" y="374.1" font-size="9.399999999999999" fill="#606060" text-anchor="middle" textLength="23.0" lengthAdjust="spacingAndGlyphs">11:50</text><line x1="1032.5" y1="353.8" x2="1032.5" y2="363.8" stroke="#e6e6e6" stroke-width="1"/><text x="1033.2" y="374.1" font-size="9.399999999999999" fill="#606060" text-anchor="middle" textLength="23.0" lengthAdjust="spacingAndGlyphs">12:00</text><line x1="1082.5" y1="353.8" x2="1082.5" y2="363.8" stroke="#e6e6e6" stroke-width="1"/><text x="1083.2" y="374.1" font-size="9.399999999999999" fill="#606060" text-anchor="middle" textLength="23.0" lengthAdjust="spacingAndGlyphs">12:10</text>
<circle cx="1313.8" cy="185.0" r="6.0" fill="#f00000"/><text x="1327.2" y="189.6" font-size="9.399999999999999" fill="#333" textLength="60.7" lengthAdjust="spacingAndGlyphs">Unavailable: 0</text><rect x="1501.5" y="177.0" width="17" height="3" rx="1.5" fill="#666"/><rect x="1501.5" y="182.0" width="17" height="3" rx="1.5" fill="#666"/><rect x="1501.5" y="187.0" width="17" height="3" rx="1.5" fill="#666"/><line x1="1194.7" y1="281.5" x2="1521.0" y2="281.5" stroke="#e6e6e6" stroke-width="1"/><line x1="1195.5" y1="207.5" x2="1195.5" y2="354.5" stroke="#e2e2e2" stroke-width="1"/><line x1="1194.7" y1="354.5" x2="1521.0" y2="354.5" stroke="#e2e2e2" stroke-width="1"/><text x="1179.7" y="284.6" font-size="9.399999999999999" fill="#d00000" text-anchor="end" textLength="5.3" lengthAdjust="spacingAndGlyphs">0</text><line x1="1210.5" y1="207.5" x2="1210.5" y2="354.5" stroke="#e6e6e6" stroke-width="1"/><line x1="1210.5" y1="354.5" x2="1210.5" y2="364.5" stroke="#e6e6e6" stroke-width="1"/><text x="1211.1" y="374.1" font-size="9.399999999999999" fill="#606060" text-anchor="middle" textLength="23.0" lengthAdjust="spacingAndGlyphs">11:20</text><line x1="1264.5" y1="207.5" x2="1264.5" y2="354.5" stroke="#e6e6e6" stroke-width="1"/><line x1="1264.5" y1="354.5" x2="1264.5" y2="364.5" stroke="#e6e6e6" stroke-width="1"/><text x="1264.8" y="374.1" font-size="9.399999999999999" fill="#606060" text-anchor="middle" textLength="23.0" lengthAdjust="spacingAndGlyphs">11:30</text><line x1="1317.5" y1="207.5" x2="1317.5" y2="354.5" stroke="#e6e6e6" stroke-width="1"/><line x1="1317.5" y1="354.5" x2="1317.5" y2="364.5" stroke="#e6e6e6" stroke-width="1"/><text x="1318.3" y="374.1" font-size="9.399999999999999" fill="#606060" text-anchor="middle" textLength="23.0" lengthAdjust="spacingAndGlyphs">11:40</text><line x1="1371.5" y1="207.5" x2="1371.5" y2="354.5" stroke="#e6e6e6" stroke-width="1"/><line x1="1371.5" y1="354.5" x2="1371.5" y2="364.5" stroke="#e6e6e6" stroke-width="1"/><text x="1371.9" y="374.1" font-size="9.399999999999999" fill="#606060" text-anchor="middle" textLength="23.0" lengthAdjust="spacingAndGlyphs">11:50</text><line x1="1424.5" y1="207.5" x2="1424.5" y2="354.5" stroke="#e6e6e6" stroke-width="1"/><line x1="1424.5" y1="354.5" x2="1424.5" y2="364.5" stroke="#e6e6e6" stroke-width="1"/><text x="1425.5" y="374.1" font-size="9.399999999999999" fill="#606060" text-anchor="middle" textLength="23.0" lengthAdjust="spacingAndGlyphs">12:00</text><line x1="1478.5" y1="207.5" x2="1478.5" y2="354.5" stroke="#e6e6e6" stroke-width="1"/><line x1="1478.5" y1="354.5" x2="1478.5" y2="364.5" stroke="#e6e6e6" stroke-width="1"/><text x="1479.1" y="374.1" font-size="9.399999999999999" fill="#606060" text-anchor="middle" textLength="23.0" lengthAdjust="spacingAndGlyphs">12:10</text><line x1="1504.5" y1="207.5" x2="1504.5" y2="354.5" stroke="#c4161c" stroke-width="1"/>
<circle cx="450.0" cy="467.0" r="6.0" fill="#c800c8"/><text x="463.0" y="471.6" font-size="9.399999999999999" fill="#333" textLength="40.0" lengthAdjust="spacingAndGlyphs">Critical: 0</text><circle cx="531.7" cy="467.0" r="6.0" fill="#e8b800"/><text x="545.6" y="471.6" font-size="9.399999999999999" fill="#333" textLength="35.7" lengthAdjust="spacingAndGlyphs">Major: 0</text><circle cx="609.5" cy="467.0" r="6.0" fill="#00c4c8"/><text x="623.1" y="471.6" font-size="9.399999999999999" fill="#333" textLength="36.0" lengthAdjust="spacingAndGlyphs">Minor: 0</text><rect x="704.5" y="459.0" width="17" height="3" rx="1.5" fill="#666"/><rect x="704.5" y="464.0" width="17" height="3" rx="1.5" fill="#666"/><rect x="704.5" y="469.0" width="17" height="3" rx="1.5" fill="#666"/><line x1="397.7" y1="563.5" x2="724.0" y2="563.5" stroke="#e6e6e6" stroke-width="1"/><line x1="398.5" y1="489.5" x2="398.5" y2="636.5" stroke="#e2e2e2" stroke-width="1"/><line x1="397.7" y1="636.5" x2="724.0" y2="636.5" stroke="#e2e2e2" stroke-width="1"/><text x="382.7" y="566.6" font-size="9.399999999999999" fill="#606060" text-anchor="end" textLength="5.3" lengthAdjust="spacingAndGlyphs">0</text><line x1="413.5" y1="489.5" x2="413.5" y2="636.5" stroke="#e6e6e6" stroke-width="1"/><line x1="413.5" y1="636.5" x2="413.5" y2="646.5" stroke="#e6e6e6" stroke-width="1"/><text x="414.2" y="656.1" font-size="9.399999999999999" fill="#606060" text-anchor="middle" textLength="23.0" lengthAdjust="spacingAndGlyphs">11:20</text><line x1="467.5" y1="489.5" x2="467.5" y2="636.5" stroke="#e6e6e6" stroke-width="1"/><line x1="467.5" y1="636.5" x2="467.5" y2="646.5" stroke="#e6e6e6" stroke-width="1"/><text x="467.8" y="656.1" font-size="9.399999999999999" fill="#606060" text-anchor="middle" textLength="23.0" lengthAdjust="spacingAndGlyphs">11:30</text><line x1="520.5" y1="489.5" x2="520.5" y2="636.5" stroke="#e6e6e6" stroke-width="1"/><line x1="520.5" y1="636.5" x2="520.5" y2="646.5" stroke="#e6e6e6" stroke-width="1"/><text x="521.4" y="656.1" font-size="9.399999999999999" fill="#606060" text-anchor="middle" textLength="23.0" lengthAdjust="spacingAndGlyphs">11:40</text><line x1="574.5" y1="489.5" x2="574.5" y2="636.5" stroke="#e6e6e6" stroke-width="1"/><line x1="574.5" y1="636.5" x2="574.5" y2="646.5" stroke="#e6e6e6" stroke-width="1"/><text x="575.0" y="656.1" font-size="9.399999999999999" fill="#606060" text-anchor="middle" textLength="23.0" lengthAdjust="spacingAndGlyphs">11:50</text><line x1="627.5" y1="489.5" x2="627.5" y2="636.5" stroke="#e6e6e6" stroke-width="1"/><line x1="627.5" y1="636.5" x2="627.5" y2="646.5" stroke="#e6e6e6" stroke-width="1"/><text x="628.6" y="656.1" font-size="9.399999999999999" fill="#606060" text-anchor="middle" textLength="23.0" lengthAdjust="spacingAndGlyphs">12:00</text><line x1="681.5" y1="489.5" x2="681.5" y2="636.5" stroke="#e6e6e6" stroke-width="1"/><line x1="681.5" y1="636.5" x2="681.5" y2="646.5" stroke="#e6e6e6" stroke-width="1"/><text x="682.1" y="656.1" font-size="9.399999999999999" fill="#606060" text-anchor="middle" textLength="23.0" lengthAdjust="spacingAndGlyphs">12:10</text><line x1="707.5" y1="489.5" x2="707.5" y2="636.5" stroke="#c4161c" stroke-width="1"/>
<line x1="803.1" y1="468.0" x2="818.6" y2="468.0" stroke="#d8c416" stroke-width="2"/><text x="824.4" y="471.4" font-size="9.399999999999999" fill="#333" textLength="62.4" lengthAdjust="spacingAndGlyphs">Max: 3,563 ms</text><line x1="908.1" y1="468.0" x2="923.6" y2="468.0" stroke="#00c000" stroke-width="2"/><text x="929.4" y="471.4" font-size="9.399999999999999" fill="#333" textLength="60.3" lengthAdjust="spacingAndGlyphs">Min: 2,953 ms</text><line x1="1011.1" y1="468.0" x2="1026.6" y2="468.0" stroke="#cccccc" stroke-width="2"/><text x="1032.1" y="471.4" font-size="9.399999999999999" fill="#cccccc" textLength="60.3" lengthAdjust="spacingAndGlyphs">Avg: 3,334 ms</text><line x1="803.1" y1="482.1" x2="818.6" y2="482.1" stroke="#e2e2e2" stroke-width="1.2" stroke-dasharray="1.2 2.6"/><text x="824.4" y="485.5" font-size="9.399999999999999" fill="#cccccc" textLength="57.4" lengthAdjust="spacingAndGlyphs">AnomalyMax</text><line x1="903.1" y1="482.1" x2="918.6" y2="482.1" stroke="#e2e2e2" stroke-width="1.2" stroke-dasharray="1.2 2.6"/><text x="924.5" y="485.5" font-size="9.399999999999999" fill="#cccccc" textLength="55.4" lengthAdjust="spacingAndGlyphs">AnomalyMin</text><circle cx="1008.9" cy="482.1" r="3.0" fill="#cccccc"/><text x="1022.5" y="485.5" font-size="9.399999999999999" fill="#cccccc" textLength="38.5" lengthAdjust="spacingAndGlyphs">Anomaly</text><rect x="1102.9" y="459.0" width="17" height="3" rx="1.5" fill="#666"/><rect x="1102.9" y="464.0" width="17" height="3" rx="1.5" fill="#666"/><rect x="1102.9" y="469.0" width="17" height="3" rx="1.5" fill="#666"/><rect x="831.5" y="502.5" width="291.0" height="134.0" fill="none" stroke="#e6e6e6"/><text x="815.7" y="506.1" font-size="9.399999999999999" fill="#606060" text-anchor="end" textLength="39.2" lengthAdjust="spacingAndGlyphs">4,000 ms</text><line x1="831.6" y1="570.5" x2="1122.0" y2="570.5" stroke="#e6e6e6" stroke-width="1"/><text x="815.7" y="574.1" font-size="9.399999999999999" fill="#606060" text-anchor="end" textLength="39.2" lengthAdjust="spacingAndGlyphs">2,000 ms</text><text x="815.7" y="640.1" font-size="9.399999999999999" fill="#606060" text-anchor="end" textLength="21.0" lengthAdjust="spacingAndGlyphs">0 ms</text><line x1="843.5" y1="502.5" x2="843.5" y2="636.5" stroke="#e6e6e6" stroke-width="1"/><line x1="843.5" y1="636.5" x2="843.5" y2="646.5" stroke="#e6e6e6" stroke-width="1"/><text x="844.1" y="656.1" font-size="9.399999999999999" fill="#606060" text-anchor="middle" textLength="23.0" lengthAdjust="spacingAndGlyphs">11:20</text><line x1="891.5" y1="502.5" x2="891.5" y2="636.5" stroke="#e6e6e6" stroke-width="1"/><line x1="891.5" y1="636.5" x2="891.5" y2="646.5" stroke="#e6e6e6" stroke-width="1"/><text x="892.5" y="656.1" font-size="9.399999999999999" fill="#606060" text-anchor="middle" textLength="23.0" lengthAdjust="spacingAndGlyphs">11:30</text><line x1="940.5" y1="502.5" x2="940.5" y2="636.5" stroke="#e6e6e6" stroke-width="1"/><line x1="940.5" y1="636.5" x2="940.5" y2="646.5" stroke="#e6e6e6" stroke-width="1"/><text x="940.9" y="656.1" font-size="9.399999999999999" fill="#606060" text-anchor="middle" textLength="23.0" lengthAdjust="spacingAndGlyphs">11:40</text><line x1="988.5" y1="502.5" x2="988.5" y2="636.5" stroke="#e6e6e6" stroke-width="1"/><line x1="988.5" y1="636.5" x2="988.5" y2="646.5" stroke="#e6e6e6" stroke-width="1"/><text x="989.3" y="656.1" font-size="9.399999999999999" fill="#606060" text-anchor="middle" textLength="23.0" lengthAdjust="spacingAndGlyphs">11:50</text><line x1="1037.5" y1="502.5" x2="1037.5" y2="636.5" stroke="#e6e6e6" stroke-width="1"/><line x1="1037.5" y1="636.5" x2="1037.5" y2="646.5" stroke="#e6e6e6" stroke-width="1"/><text x="1037.7" y="656.1" font-size="9.399999999999999" fill="#606060" text-anchor="middle" textLength="23.0" lengthAdjust="spacingAndGlyphs">12:00</text><line x1="1085.5" y1="502.5" x2="1085.5" y2="636.5" stroke="#e6e6e6" stroke-width="1"/><line x1="1085.5" y1="636.5" x2="1085.5" y2="646.5" stroke="#e6e6e6" stroke-width="1"/><text x="1086.1" y="656.1" font-size="9.399999999999999" fill="#606060" text-anchor="middle" textLength="23.0" lengthAdjust="spacingAndGlyphs">12:10</text><polyline points="838.7,522.7 863.0,528.5 887.2,521.8 911.4,521.0 935.6,527.0 959.8,528.5 984.0,537.4 1008.2,522.0 1032.4,525.3 1056.6,522.4 1080.8,524.4 1105.0,517.2" fill="none" stroke="#d8c416" stroke-width="2" stroke-linejoin="round" stroke-linecap="round"/><line x1="1109.5" y1="502.5" x2="1109.5" y2="636.5" stroke="#c4161c" stroke-width="1"/>
<line x1="1202.0" y1="468.0" x2="1217.5" y2="468.0" stroke="#d8c416" stroke-width="2"/><text x="1223.2" y="471.4" font-size="9.399999999999999" fill="#333" textLength="62.4" lengthAdjust="spacingAndGlyphs">Max: 5,250 ms</text><line x1="1307.0" y1="468.0" x2="1322.5" y2="468.0" stroke="#00c000" stroke-width="2"/><text x="1328.2" y="471.4" font-size="9.399999999999999" fill="#333" textLength="60.4" lengthAdjust="spacingAndGlyphs">Min: 4,609 ms</text><line x1="1410.0" y1="468.0" x2="1425.5" y2="468.0" stroke="#cccccc" stroke-width="2"/><text x="1430.9" y="471.4" font-size="9.399999999999999" fill="#cccccc" textLength="60.4" lengthAdjust="spacingAndGlyphs">Avg: 5,035 ms</text><line x1="1202.0" y1="482.1" x2="1217.5" y2="482.1" stroke="#e2e2e2" stroke-width="1.2" stroke-dasharray="1.2 2.6"/><text x="1223.2" y="485.5" font-size="9.399999999999999" fill="#cccccc" textLength="57.5" lengthAdjust="spacingAndGlyphs">AnomalyMax</text><line x1="1302.0" y1="482.1" x2="1317.5" y2="482.1" stroke="#e2e2e2" stroke-width="1.2" stroke-dasharray="1.2 2.6"/><text x="1323.3" y="485.5" font-size="9.399999999999999" fill="#cccccc" textLength="55.4" lengthAdjust="spacingAndGlyphs">AnomalyMin</text><circle cx="1408.0" cy="482.1" r="3.0" fill="#cccccc"/><text x="1421.6" y="485.5" font-size="9.399999999999999" fill="#cccccc" textLength="38.6" lengthAdjust="spacingAndGlyphs">Anomaly</text><rect x="1501.7" y="459.0" width="17" height="3" rx="1.5" fill="#666"/><rect x="1501.7" y="464.0" width="17" height="3" rx="1.5" fill="#666"/><rect x="1501.7" y="469.0" width="17" height="3" rx="1.5" fill="#666"/><rect x="1228.5" y="502.5" width="292.0" height="134.0" fill="none" stroke="#e6e6e6"/><text x="1213.8" y="506.1" font-size="9.399999999999999" fill="#606060" text-anchor="end" textLength="38.6" lengthAdjust="spacingAndGlyphs">7,500 ms</text><line x1="1228.7" y1="547.5" x2="1520.7" y2="547.5" stroke="#e6e6e6" stroke-width="1"/><text x="1213.8" y="551.1" font-size="9.399999999999999" fill="#606060" text-anchor="end" textLength="38.6" lengthAdjust="spacingAndGlyphs">5,000 ms</text><line x1="1228.7" y1="592.5" x2="1520.7" y2="592.5" stroke="#e6e6e6" stroke-width="1"/><text x="1213.8" y="596.1" font-size="9.399999999999999" fill="#606060" text-anchor="end" textLength="38.6" lengthAdjust="spacingAndGlyphs">2,500 ms</text><text x="1213.8" y="640.1" font-size="9.399999999999999" fill="#606060" text-anchor="end" textLength="21.0" lengthAdjust="spacingAndGlyphs">0 ms</text><line x1="1241.5" y1="502.5" x2="1241.5" y2="636.5" stroke="#e6e6e6" stroke-width="1"/><line x1="1241.5" y1="636.5" x2="1241.5" y2="646.5" stroke="#e6e6e6" stroke-width="1"/><text x="1241.9" y="656.1" font-size="9.399999999999999" fill="#606060" text-anchor="middle" textLength="23.0" lengthAdjust="spacingAndGlyphs">11:20</text><line x1="1289.5" y1="502.5" x2="1289.5" y2="636.5" stroke="#e6e6e6" stroke-width="1"/><line x1="1289.5" y1="636.5" x2="1289.5" y2="646.5" stroke="#e6e6e6" stroke-width="1"/><text x="1290.5" y="656.1" font-size="9.399999999999999" fill="#606060" text-anchor="middle" textLength="23.0" lengthAdjust="spacingAndGlyphs">11:30</text><line x1="1338.5" y1="502.5" x2="1338.5" y2="636.5" stroke="#e6e6e6" stroke-width="1"/><line x1="1338.5" y1="636.5" x2="1338.5" y2="646.5" stroke="#e6e6e6" stroke-width="1"/><text x="1339.1" y="656.1" font-size="9.399999999999999" fill="#606060" text-anchor="middle" textLength="23.0" lengthAdjust="spacingAndGlyphs">11:40</text><line x1="1387.5" y1="502.5" x2="1387.5" y2="636.5" stroke="#e6e6e6" stroke-width="1"/><line x1="1387.5" y1="636.5" x2="1387.5" y2="646.5" stroke="#e6e6e6" stroke-width="1"/><text x="1387.7" y="656.1" font-size="9.399999999999999" fill="#606060" text-anchor="middle" textLength="23.0" lengthAdjust="spacingAndGlyphs">11:50</text><line x1="1435.5" y1="502.5" x2="1435.5" y2="636.5" stroke="#e6e6e6" stroke-width="1"/><line x1="1435.5" y1="636.5" x2="1435.5" y2="646.5" stroke="#e6e6e6" stroke-width="1"/><text x="1436.3" y="656.1" font-size="9.399999999999999" fill="#606060" text-anchor="middle" textLength="23.0" lengthAdjust="spacingAndGlyphs">12:00</text><line x1="1484.5" y1="502.5" x2="1484.5" y2="636.5" stroke="#e6e6e6" stroke-width="1"/><line x1="1484.5" y1="636.5" x2="1484.5" y2="646.5" stroke="#e6e6e6" stroke-width="1"/><text x="1484.9" y="656.1" font-size="9.399999999999999" fill="#606060" text-anchor="middle" textLength="23.0" lengthAdjust="spacingAndGlyphs">12:10</text><polyline points="1236.3,543.9 1260.7,548.2 1285.1,544.2 1309.5,543.9 1333.9,548.5 1358.3,548.2 1382.7,554.2 1407.1,546.5 1431.5,547.1 1455.9,544.5 1480.3,546.5 1504.7,542.7" fill="none" stroke="#d8c416" stroke-width="2" stroke-linejoin="round" stroke-linecap="round"/><line x1="1508.5" y1="502.5" x2="1508.5" y2="636.5" stroke="#c4161c" stroke-width="1"/>
<line x1="420.0" y1="750.0" x2="435.5" y2="750.0" stroke="#d8c416" stroke-width="2"/><text x="441.2" y="753.4" font-size="9.399999999999999" fill="#333" textLength="39.0" lengthAdjust="spacingAndGlyphs">Max: 659</text><line x1="501.2" y1="750.0" x2="516.7" y2="750.0" stroke="#00c000" stroke-width="2"/><text x="522.5" y="753.4" font-size="9.399999999999999" fill="#333" textLength="37.5" lengthAdjust="spacingAndGlyphs">Min: 659</text><line x1="581.0" y1="750.0" x2="596.5" y2="750.0" stroke="#cccccc" stroke-width="2"/><text x="602.2" y="753.4" font-size="9.399999999999999" fill="#cccccc" textLength="37.5" lengthAdjust="spacingAndGlyphs">Avg: 659</text><line x1="420.0" y1="764.1" x2="435.5" y2="764.1" stroke="#f2f2f2" stroke-width="1.2" stroke-dasharray="1.2 2.6"/><text x="441.2" y="767.5" font-size="9.399999999999999" fill="#cccccc" textLength="57.0" lengthAdjust="spacingAndGlyphs">AnomalyMax</text><line x1="520.0" y1="764.1" x2="535.5" y2="764.1" stroke="#f2f2f2" stroke-width="1.2" stroke-dasharray="1.2 2.6"/><text x="541.1" y="767.5" font-size="9.399999999999999" fill="#cccccc" textLength="55.2" lengthAdjust="spacingAndGlyphs">AnomalyMin</text><circle cx="626.2" cy="764.1" r="3.0" fill="#f00000"/><text x="639.8" y="767.5" font-size="9.399999999999999" fill="#333" textLength="38.0" lengthAdjust="spacingAndGlyphs">Anomaly</text><rect x="704.8" y="741.0" width="17" height="3" rx="1.5" fill="#666"/><rect x="704.8" y="746.0" width="17" height="3" rx="1.5" fill="#666"/><rect x="704.8" y="751.0" width="17" height="3" rx="1.5" fill="#666"/><rect x="408.5" y="784.5" width="315.0" height="134.0" fill="none" stroke="#e6e6e6"/><text x="394.0" y="788.1" font-size="9.399999999999999" fill="#606060" text-anchor="end" textLength="15.7" lengthAdjust="spacingAndGlyphs">750</text><line x1="408.7" y1="829.5" x2="723.6" y2="829.5" stroke="#e6e6e6" stroke-width="1"/><text x="394.0" y="833.1" font-size="9.399999999999999" fill="#606060" text-anchor="end" textLength="15.7" lengthAdjust="spacingAndGlyphs">500</text><line x1="408.7" y1="874.5" x2="723.6" y2="874.5" stroke="#e6e6e6" stroke-width="1"/><text x="394.0" y="878.1" font-size="9.399999999999999" fill="#606060" text-anchor="end" textLength="15.7" lengthAdjust="spacingAndGlyphs">250</text><text x="394.0" y="922.1" font-size="9.399999999999999" fill="#606060" text-anchor="end" textLength="5.3" lengthAdjust="spacingAndGlyphs">0</text><line x1="422.5" y1="784.5" x2="422.5" y2="918.5" stroke="#e6e6e6" stroke-width="1"/><line x1="422.5" y1="918.5" x2="422.5" y2="928.5" stroke="#e6e6e6" stroke-width="1"/><text x="423.1" y="938.1" font-size="9.399999999999999" fill="#606060" text-anchor="middle" textLength="23.0" lengthAdjust="spacingAndGlyphs">11:20</text><line x1="474.5" y1="784.5" x2="474.5" y2="918.5" stroke="#e6e6e6" stroke-width="1"/><line x1="474.5" y1="918.5" x2="474.5" y2="928.5" stroke="#e6e6e6" stroke-width="1"/><text x="475.5" y="938.1" font-size="9.399999999999999" fill="#606060" text-anchor="middle" textLength="23.0" lengthAdjust="spacingAndGlyphs">11:30</text><line x1="527.5" y1="784.5" x2="527.5" y2="918.5" stroke="#e6e6e6" stroke-width="1"/><line x1="527.5" y1="918.5" x2="527.5" y2="928.5" stroke="#e6e6e6" stroke-width="1"/><text x="527.9" y="938.1" font-size="9.399999999999999" fill="#606060" text-anchor="middle" textLength="23.0" lengthAdjust="spacingAndGlyphs">11:40</text><line x1="579.5" y1="784.5" x2="579.5" y2="918.5" stroke="#e6e6e6" stroke-width="1"/><line x1="579.5" y1="918.5" x2="579.5" y2="928.5" stroke="#e6e6e6" stroke-width="1"/><text x="580.3" y="938.1" font-size="9.399999999999999" fill="#606060" text-anchor="middle" textLength="23.0" lengthAdjust="spacingAndGlyphs">11:50</text><line x1="632.5" y1="784.5" x2="632.5" y2="918.5" stroke="#e6e6e6" stroke-width="1"/><line x1="632.5" y1="918.5" x2="632.5" y2="928.5" stroke="#e6e6e6" stroke-width="1"/><text x="632.7" y="938.1" font-size="9.399999999999999" fill="#606060" text-anchor="middle" textLength="23.0" lengthAdjust="spacingAndGlyphs">12:00</text><line x1="684.5" y1="784.5" x2="684.5" y2="918.5" stroke="#e6e6e6" stroke-width="1"/><line x1="684.5" y1="918.5" x2="684.5" y2="928.5" stroke="#e6e6e6" stroke-width="1"/><text x="685.1" y="938.1" font-size="9.399999999999999" fill="#606060" text-anchor="middle" textLength="23.0" lengthAdjust="spacingAndGlyphs">12:10</text><polyline points="416.1,800.7 707.1,800.7" fill="none" stroke="#d8c416" stroke-width="2" stroke-linejoin="round" stroke-linecap="round"/><line x1="710.5" y1="784.5" x2="710.5" y2="918.5" stroke="#c4161c" stroke-width="1"/>
<line x1="803.7" y1="750.0" x2="819.2" y2="750.0" stroke="#d8c416" stroke-width="2"/><text x="825.6" y="753.4" font-size="9.399999999999999" fill="#333" textLength="28.4" lengthAdjust="spacingAndGlyphs">Max: 0</text><line x1="874.3" y1="750.0" x2="889.8" y2="750.0" stroke="#00c000" stroke-width="2"/><text x="895.6" y="753.4" font-size="9.399999999999999" fill="#333" textLength="27.2" lengthAdjust="spacingAndGlyphs">Min: 0</text><line x1="943.5" y1="750.0" x2="959.0" y2="750.0" stroke="#7ba3cf" stroke-width="2"/><text x="964.7" y="753.4" font-size="9.399999999999999" fill="#333" textLength="26.9" lengthAdjust="spacingAndGlyphs">Avg: 0</text><line x1="1013.0" y1="750.0" x2="1028.5" y2="750.0" stroke="#f3c9a0" stroke-width="1.2" stroke-dasharray="1.2 2.6"/><text x="1034.7" y="753.4" font-size="9.399999999999999" fill="#333" textLength="57.0" lengthAdjust="spacingAndGlyphs">AnomalyMax</text><line x1="803.7" y1="764.1" x2="819.2" y2="764.1" stroke="#f3c9a0" stroke-width="1.2" stroke-dasharray="1.2 2.6"/><text x="825.6" y="767.5" font-size="9.399999999999999" fill="#333" textLength="55.0" lengthAdjust="spacingAndGlyphs">AnomalyMin</text><circle cx="910.4" cy="764.1" r="3.0" fill="#f00000"/><text x="924.0" y="767.5" font-size="9.399999999999999" fill="#333" textLength="38.0" lengthAdjust="spacingAndGlyphs">Anomaly</text><rect x="1102.8" y="741.0" width="17" height="3" rx="1.5" fill="#666"/><rect x="1102.8" y="746.0" width="17" height="3" rx="1.5" fill="#666"/><rect x="1102.8" y="751.0" width="17" height="3" rx="1.5" fill="#666"/><line x1="796.2" y1="851.5" x2="1123.0" y2="851.5" stroke="#e6e6e6" stroke-width="1"/><line x1="796.5" y1="785.0" x2="796.5" y2="918.5" stroke="#e2e2e2" stroke-width="1"/><line x1="796.2" y1="918.5" x2="1123.0" y2="918.5" stroke="#e2e2e2" stroke-width="1"/><text x="781.2" y="854.9" font-size="9.399999999999999" fill="#606060" text-anchor="end" textLength="5.3" lengthAdjust="spacingAndGlyphs">0</text><line x1="809.5" y1="785.0" x2="809.5" y2="918.5" stroke="#e6e6e6" stroke-width="1"/><line x1="809.5" y1="918.5" x2="809.5" y2="928.5" stroke="#e6e6e6" stroke-width="1"/><text x="810.1" y="938.1" font-size="9.399999999999999" fill="#606060" text-anchor="middle" textLength="23.0" lengthAdjust="spacingAndGlyphs">11:20</text><line x1="863.5" y1="785.0" x2="863.5" y2="918.5" stroke="#e6e6e6" stroke-width="1"/><line x1="863.5" y1="918.5" x2="863.5" y2="928.5" stroke="#e6e6e6" stroke-width="1"/><text x="864.1" y="938.1" font-size="9.399999999999999" fill="#606060" text-anchor="middle" textLength="23.0" lengthAdjust="spacingAndGlyphs">11:30</text><line x1="918.5" y1="785.0" x2="918.5" y2="918.5" stroke="#e6e6e6" stroke-width="1"/><line x1="918.5" y1="918.5" x2="918.5" y2="928.5" stroke="#e6e6e6" stroke-width="1"/><text x="919.1" y="938.1" font-size="9.399999999999999" fill="#606060" text-anchor="middle" textLength="23.0" lengthAdjust="spacingAndGlyphs">11:40</text><line x1="972.5" y1="785.0" x2="972.5" y2="918.5" stroke="#e6e6e6" stroke-width="1"/><line x1="972.5" y1="918.5" x2="972.5" y2="928.5" stroke="#e6e6e6" stroke-width="1"/><text x="973.1" y="938.1" font-size="9.399999999999999" fill="#606060" text-anchor="middle" textLength="23.0" lengthAdjust="spacingAndGlyphs">11:50</text><line x1="1026.5" y1="785.0" x2="1026.5" y2="918.5" stroke="#e6e6e6" stroke-width="1"/><line x1="1026.5" y1="918.5" x2="1026.5" y2="928.5" stroke="#e6e6e6" stroke-width="1"/><text x="1027.1" y="938.1" font-size="9.399999999999999" fill="#606060" text-anchor="middle" textLength="23.0" lengthAdjust="spacingAndGlyphs">12:00</text><line x1="1081.5" y1="785.0" x2="1081.5" y2="918.5" stroke="#e6e6e6" stroke-width="1"/><line x1="1081.5" y1="918.5" x2="1081.5" y2="928.5" stroke="#e6e6e6" stroke-width="1"/><text x="1082.1" y="938.1" font-size="9.399999999999999" fill="#606060" text-anchor="middle" textLength="23.0" lengthAdjust="spacingAndGlyphs">12:10</text><line x1="1122.5" y1="785.0" x2="1122.5" y2="918.5" stroke="#efefef" stroke-width="1"/><line x1="796.2" y1="851.2" x2="1115.0" y2="851.2" stroke="#7ba3cf" stroke-width="2"/><line x1="1107.5" y1="785.0" x2="1107.5" y2="918.5" stroke="#c4161c" stroke-width="1"/>
<line x1="1202.7" y1="750.0" x2="1218.2" y2="750.0" stroke="#d8c416" stroke-width="2"/><text x="1224.6" y="753.4" font-size="9.399999999999999" fill="#333" textLength="28.4" lengthAdjust="spacingAndGlyphs">Max: 0</text><line x1="1273.3" y1="750.0" x2="1288.8" y2="750.0" stroke="#00c000" stroke-width="2"/><text x="1294.6" y="753.4" font-size="9.399999999999999" fill="#333" textLength="27.2" lengthAdjust="spacingAndGlyphs">Min: 0</text><line x1="1342.5" y1="750.0" x2="1358.0" y2="750.0" stroke="#7ba3cf" stroke-width="2"/><text x="1363.7" y="753.4" font-size="9.399999999999999" fill="#333" textLength="26.9" lengthAdjust="spacingAndGlyphs">Avg: 0</text><line x1="1412.0" y1="750.0" x2="1427.5" y2="750.0" stroke="#f3c9a0" stroke-width="1.2" stroke-dasharray="1.2 2.6"/><text x="1433.7" y="753.4" font-size="9.399999999999999" fill="#333" textLength="57.0" lengthAdjust="spacingAndGlyphs">AnomalyMax</text><line x1="1202.7" y1="764.1" x2="1218.2" y2="764.1" stroke="#f3c9a0" stroke-width="1.2" stroke-dasharray="1.2 2.6"/><text x="1224.6" y="767.5" font-size="9.399999999999999" fill="#333" textLength="55.0" lengthAdjust="spacingAndGlyphs">AnomalyMin</text><circle cx="1309.4" cy="764.1" r="3.0" fill="#f00000"/><text x="1323.0" y="767.5" font-size="9.399999999999999" fill="#333" textLength="38.0" lengthAdjust="spacingAndGlyphs">Anomaly</text><rect x="1501.8" y="741.0" width="17" height="3" rx="1.5" fill="#666"/><rect x="1501.8" y="746.0" width="17" height="3" rx="1.5" fill="#666"/><rect x="1501.8" y="751.0" width="17" height="3" rx="1.5" fill="#666"/><line x1="1195.2" y1="851.5" x2="1520.2" y2="851.5" stroke="#e6e6e6" stroke-width="1"/><line x1="1195.5" y1="785.0" x2="1195.5" y2="918.5" stroke="#e2e2e2" stroke-width="1"/><line x1="1195.2" y1="918.5" x2="1520.2" y2="918.5" stroke="#e2e2e2" stroke-width="1"/><text x="1180.2" y="854.9" font-size="9.399999999999999" fill="#606060" text-anchor="end" textLength="5.3" lengthAdjust="spacingAndGlyphs">0</text><line x1="1208.5" y1="785.0" x2="1208.5" y2="918.5" stroke="#e6e6e6" stroke-width="1"/><line x1="1208.5" y1="918.5" x2="1208.5" y2="928.5" stroke="#e6e6e6" stroke-width="1"/><text x="1209.1" y="938.1" font-size="9.399999999999999" fill="#606060" text-anchor="middle" textLength="23.0" lengthAdjust="spacingAndGlyphs">11:20</text><line x1="1262.5" y1="785.0" x2="1262.5" y2="918.5" stroke="#e6e6e6" stroke-width="1"/><line x1="1262.5" y1="918.5" x2="1262.5" y2="928.5" stroke="#e6e6e6" stroke-width="1"/><text x="1263.1" y="938.1" font-size="9.399999999999999" fill="#606060" text-anchor="middle" textLength="23.0" lengthAdjust="spacingAndGlyphs">11:30</text><line x1="1317.5" y1="785.0" x2="1317.5" y2="918.5" stroke="#e6e6e6" stroke-width="1"/><line x1="1317.5" y1="918.5" x2="1317.5" y2="928.5" stroke="#e6e6e6" stroke-width="1"/><text x="1318.1" y="938.1" font-size="9.399999999999999" fill="#606060" text-anchor="middle" textLength="23.0" lengthAdjust="spacingAndGlyphs">11:40</text><line x1="1371.5" y1="785.0" x2="1371.5" y2="918.5" stroke="#e6e6e6" stroke-width="1"/><line x1="1371.5" y1="918.5" x2="1371.5" y2="928.5" stroke="#e6e6e6" stroke-width="1"/><text x="1372.1" y="938.1" font-size="9.399999999999999" fill="#606060" text-anchor="middle" textLength="23.0" lengthAdjust="spacingAndGlyphs">11:50</text><line x1="1425.5" y1="785.0" x2="1425.5" y2="918.5" stroke="#e6e6e6" stroke-width="1"/><line x1="1425.5" y1="918.5" x2="1425.5" y2="928.5" stroke="#e6e6e6" stroke-width="1"/><text x="1426.1" y="938.1" font-size="9.399999999999999" fill="#606060" text-anchor="middle" textLength="23.0" lengthAdjust="spacingAndGlyphs">12:00</text><line x1="1480.5" y1="785.0" x2="1480.5" y2="918.5" stroke="#e6e6e6" stroke-width="1"/><line x1="1480.5" y1="918.5" x2="1480.5" y2="928.5" stroke="#e6e6e6" stroke-width="1"/><text x="1481.1" y="938.1" font-size="9.399999999999999" fill="#606060" text-anchor="middle" textLength="23.0" lengthAdjust="spacingAndGlyphs">12:10</text><line x1="1519.5" y1="785.0" x2="1519.5" y2="918.5" stroke="#efefef" stroke-width="1"/><line x1="1195.2" y1="851.2" x2="1514.0" y2="851.2" stroke="#7ba3cf" stroke-width="2"/><line x1="1506.5" y1="785.0" x2="1506.5" y2="918.5" stroke="#c4161c" stroke-width="1"/>
<g filter="url(#tsh)"><rect x="1356.9" y="128.5" width="263.2" height="24" fill="#f5f5f5" stroke="#969696"/></g>
<text x="1362.5" y="145.8" font-size="15" fill="#787878" textLength="251.0" lengthAdjust="spacingAndGlyphs">2018-10-22 11:18 to 2018-10-22 12:18</text>
<defs><filter id="tsh" x="-10%" y="-30%" width="125%" height="190%"><feDropShadow dx="3.5" dy="3.5" stdDeviation="2" flood-color="#000" flood-opacity=".5"/></filter></defs>
<g transform="translate(1344.2,92.2) scale(1.5)"><path d="M7.5 1.2 c1 -0.4 2 0.2 2 1.4 v6.2 l0.6 -0.2 c0.4 -1 2.2 -1 2.6 0.2 c0.6 -0.8 2.2 -0.6 2.6 0.4 c0.8 -0.6 2.2 0 2.2 1.2 v5.2 c0 2.4 -1.4 5 -2.6 6.4 h-7.4 c-1.6 -2.4 -4 -5.4 -5.8 -8 c-0.8 -1.2 0.6 -2.4 1.8 -1.6 l2.6 2.2 v-12 c0 -0.8 0.6 -1.2 1.4 -1.4z" fill="#fff" stroke="#111" stroke-width="0.9" stroke-linejoin="round"/><path d="M10.1 10.4 v4.2 M12.7 10.4 v4.2 M15.3 11 v3.6" stroke="#111" stroke-width="0.8" fill="none"/></g>
</svg>
</div>
</body></html>
